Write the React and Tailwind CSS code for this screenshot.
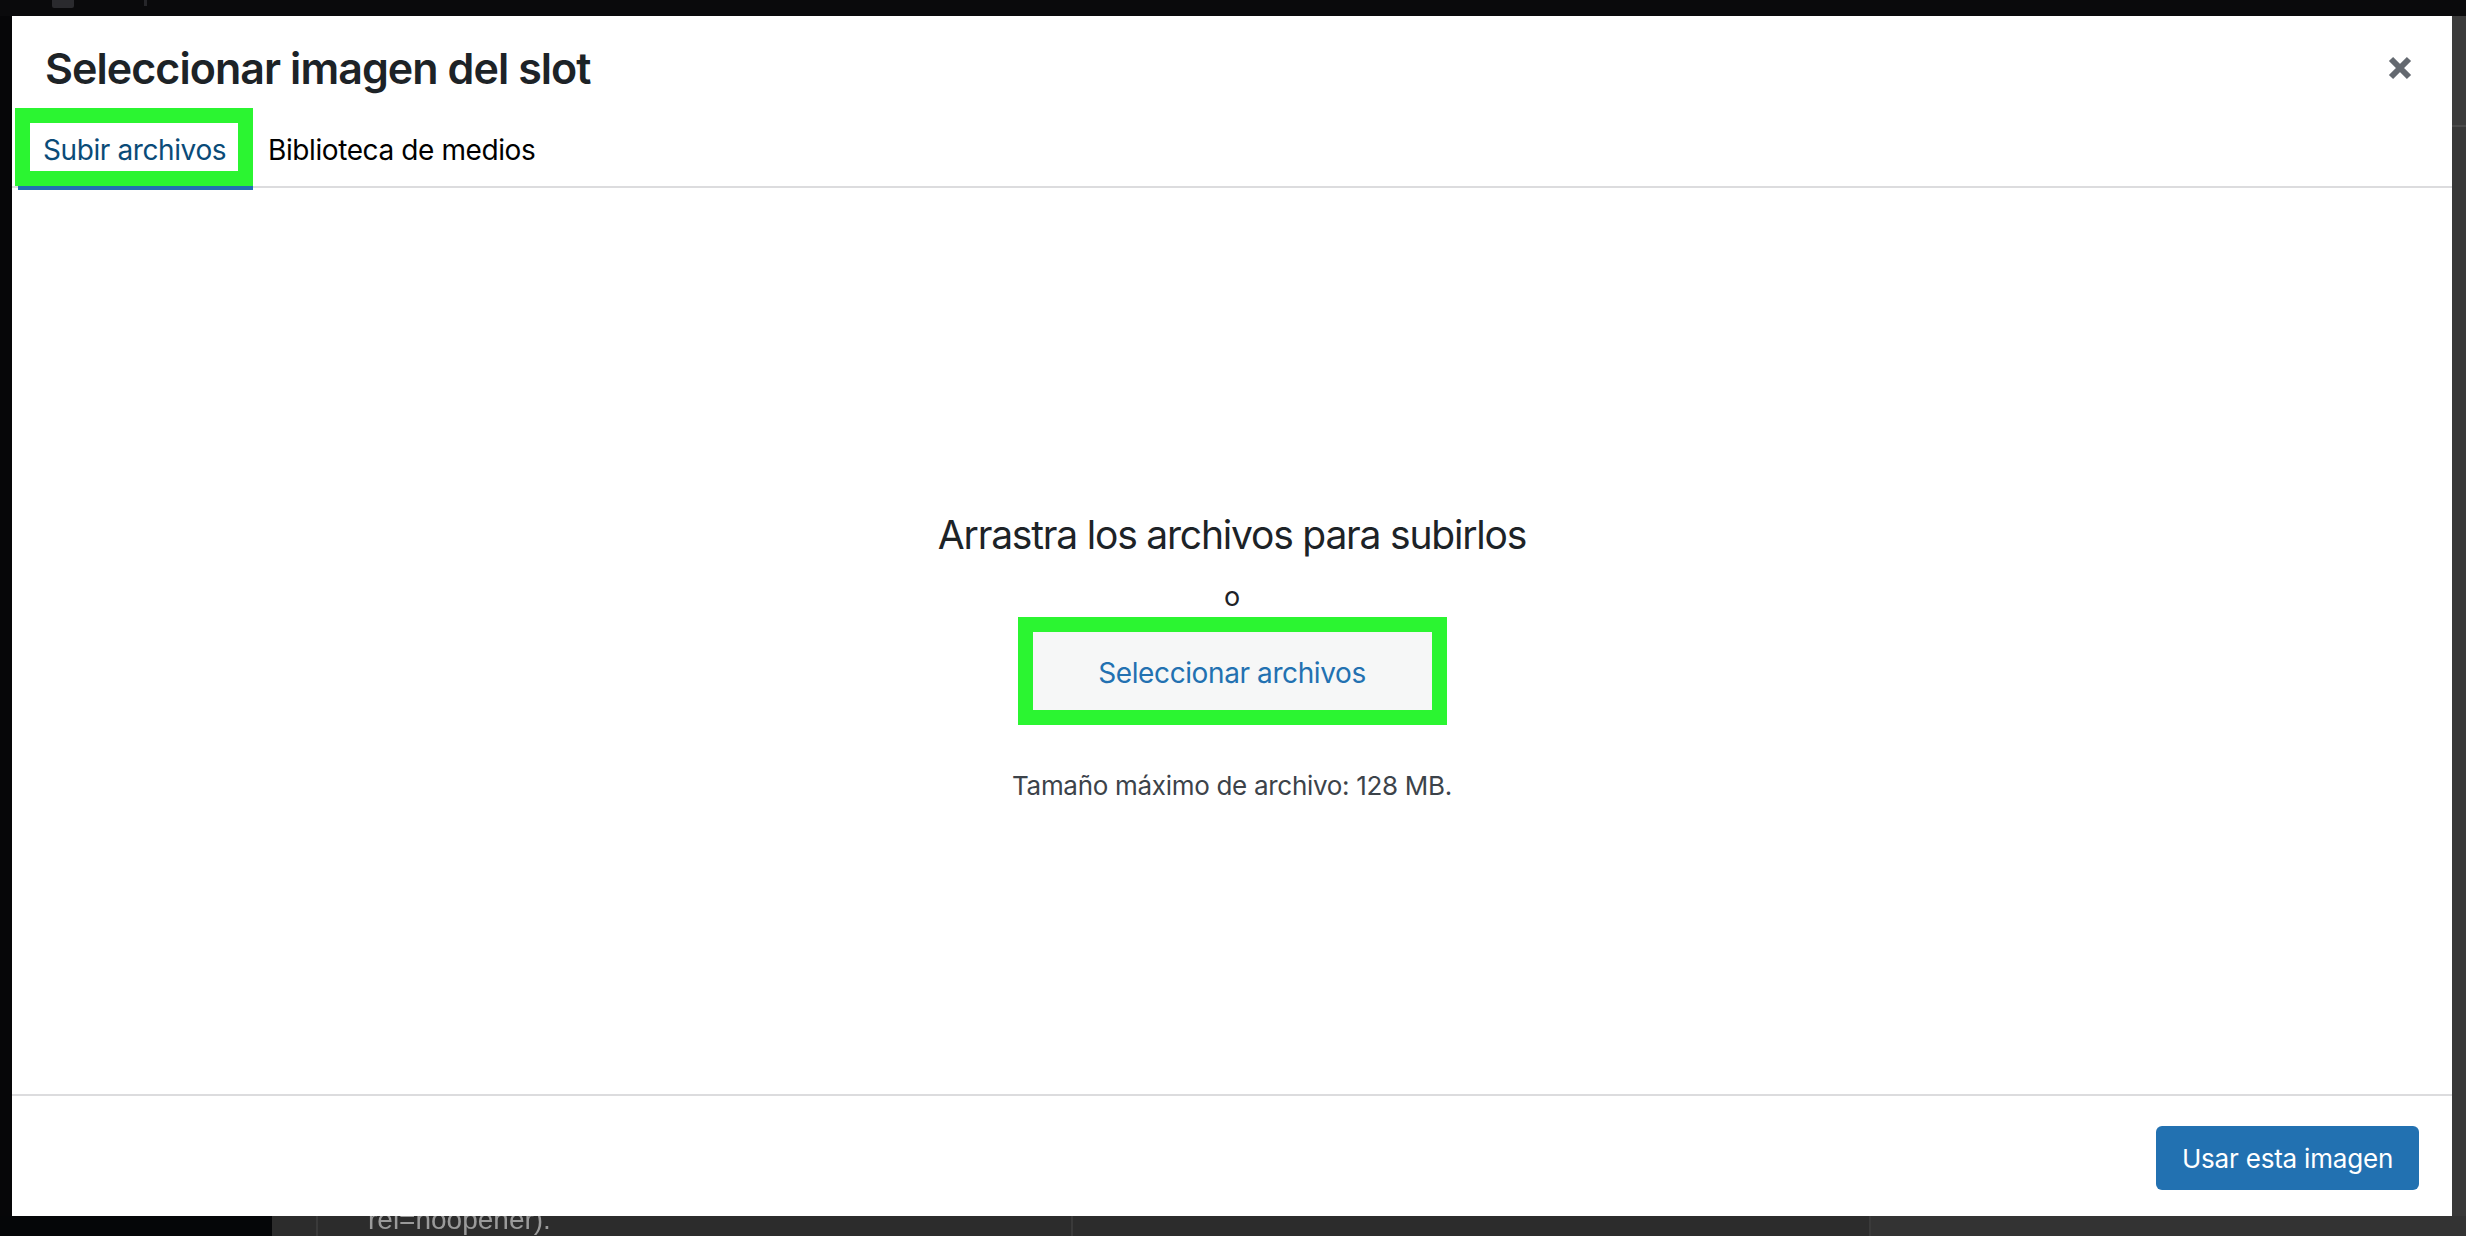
const font = { fontFamily: 'Inter, "Noto Sans", sans-serif' };

const CloseIcon = () => (
  <svg width="24" height="24" viewBox="0 0 24 24" aria-hidden="true">
    <path d="M3 3 L21 21 M21 3 L3 21" stroke="#646970" strokeWidth="6" />
  </svg>
);

const MediaModal = () => {
  return (
    <div className="flex-1 flex flex-col bg-white min-w-0">
      {/* title bar */}
      <div className="flex items-center justify-between pt-[30px] pl-[33px] pr-[40px]">
        <h1 className="text-[43px] leading-[44px] font-semibold text-[#1d2327] tracking-[-0.95px]">
          Seleccionar imagen del slot
        </h1>
        <button className="w-[24px] h-[24px] flex items-center justify-center">
          <CloseIcon />
        </button>
      </div>

      {/* router tabs */}
      <div className="flex items-end mt-[18px] border-b-[2px] border-[#dcdcde]">
        <div className="relative z-10 flex flex-col ml-[3px] mb-[-4px]">
          <div className="h-[78px] w-[238px] border-[15px] border-[#2bf531]">
            <div className="h-full bg-white flex items-center pl-[13px] pt-[5px]">
              <span className="text-[28px] leading-[28px] text-[#0a4b78] tracking-[-0.4px]">
                Subir archivos
              </span>
            </div>
          </div>
          <div className="h-[4px] ml-[3px] bg-[#2271b1]" />
        </div>
        <div className="h-[78px] flex items-center pl-[15px] pt-[5px]">
          <span className="text-[28px] leading-[28px] text-black tracking-[-0.4px]">
            Biblioteca de medios
          </span>
        </div>
      </div>

      {/* upload area */}
      <div className="flex-1 flex flex-col items-center pt-[323px]">
        <h2 className="text-[39px] leading-[48px] text-[#1d2327] tracking-[-1.2px]">
          Arrastra los archivos para subirlos
        </h2>
        <p className="text-[27px] leading-[28px] text-[#1d2327] mt-[24px]">o</p>
        <div className="mt-[6px] border-[15px] border-[#2bf531]">
          <button className="w-[399px] h-[78px] bg-[#f6f7f7] text-[#2271b1] text-[28px] tracking-[-0.4px] pt-[3px]">
            Seleccionar archivos
          </button>
        </div>
        <p className="mt-[46px] text-[26px] leading-[30px] text-[#3c434a] tracking-[-0.3px]">
          Tamaño máximo de archivo: 128 MB.
        </p>
      </div>

      {/* toolbar */}
      <div className="h-[122px] border-t-[2px] border-[#dcdcde] flex items-start justify-end pt-[30px] pr-[33px]">
        <button className="h-[64px] w-[263px] rounded-[6px] bg-[#2271b1] text-white text-[26px] tracking-[-0.2px]">
          Usar esta imagen
        </button>
      </div>
    </div>
  );
};

export default function App() {
  return (
    <div className="w-[2466px] h-[1236px] flex flex-col bg-[#0a0a0c] overflow-hidden" style={font}>
      {/* dimmed admin bar behind the overlay */}
      <div className="h-[16px] flex items-start pl-[52px] gap-[70px]">
        <div className="w-[22px] h-[8px] bg-[#2a2a2e] rounded-b-[2px]" />
        <div className="w-[3px] h-[6px] bg-[#26262a]" />
      </div>

      <div className="flex-1 flex min-h-0">
        <div className="w-[12px] bg-[#060608]" />
        <MediaModal />
        <div className="w-[14px] flex flex-col">
          <div className="h-[109px] bg-[#3b3b3b]" />
          <div className="h-[2px] bg-[#4a4a4a]" />
          <div className="flex-1 bg-[#383838]" />
        </div>
      </div>

      {/* bit of the editor page below the overlay */}
      <div className="h-[20px] flex overflow-hidden">
        <div className="w-[272px] bg-[#050608]" />
        <div className="flex-1 flex bg-[#2c2c2c]">
          <div className="w-[46px] border-r-[2px] border-[#3a3a3a]" />
          <div className="w-[755px] border-r-[2px] border-[#3a3a3a] pl-[50px] overflow-hidden">
            <div className="mt-[-12px] text-[28px] leading-[32px] text-[#9a9a9a] blur-[0.6px]" style={{ fontFamily: '"Liberation Sans", sans-serif' }}>
              rel=noopener).
            </div>
          </div>
          <div className="w-[798px] border-r-[2px] border-[#3a3a3a]" />
          <div className="flex-1 bg-[#333333]" />
        </div>
      </div>
    </div>
  );
}
